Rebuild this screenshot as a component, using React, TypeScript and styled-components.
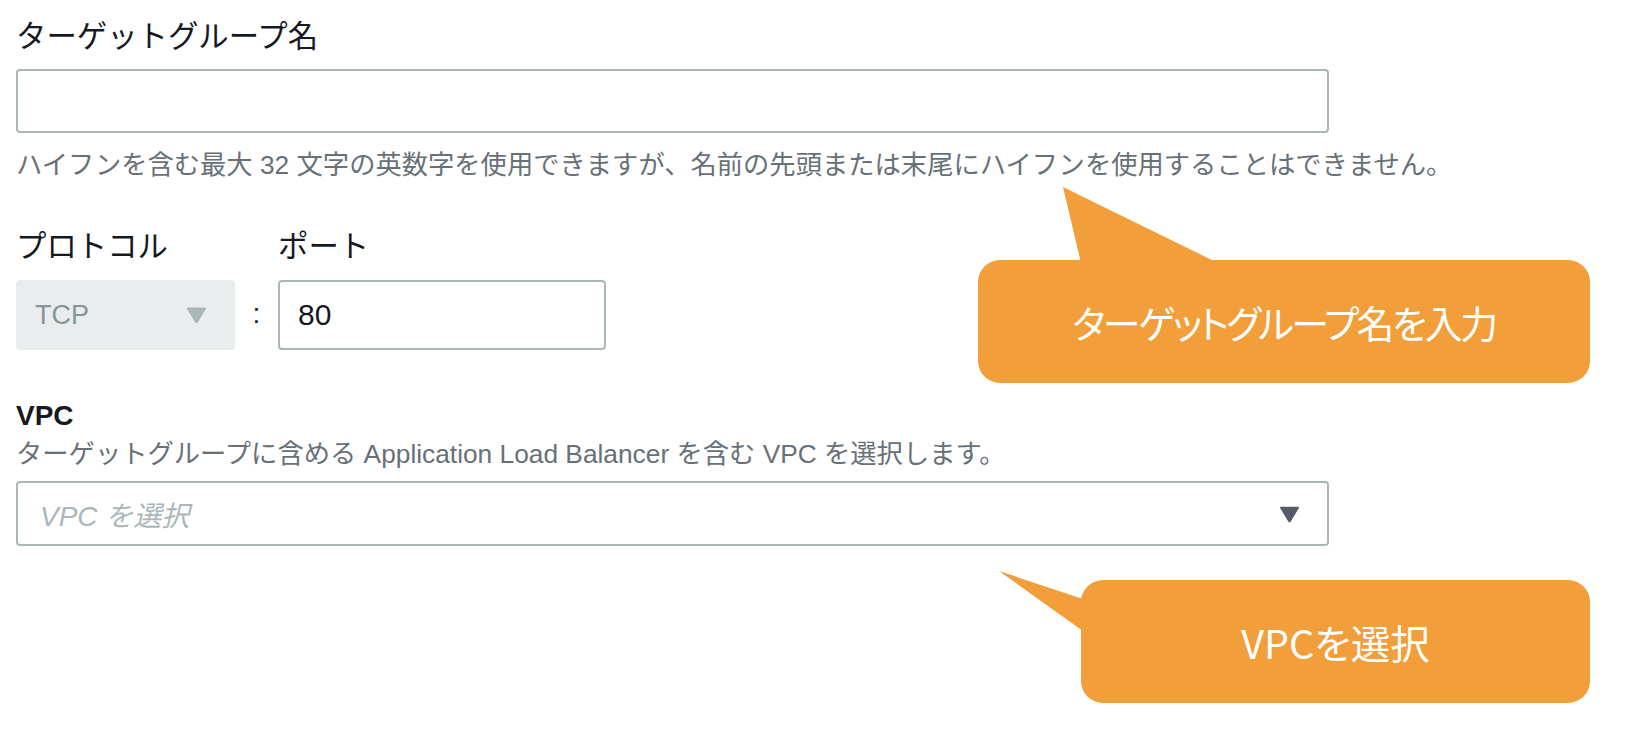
import React from 'react'
import styled, { createGlobalStyle } from 'styled-components'

const GlobalStyle = createGlobalStyle`
  html, body {
    margin: 0;
    padding: 0;
    background: #ffffff;
  }
  body {
    font-family: 'Liberation Sans', 'Noto Sans CJK JP', sans-serif;
    color: #16191f;
  }
`

const Caret = ({ color, width, height }: { color: string; width: number; height: number }) => (
  <svg width={width} height={height} viewBox='0 0 20 17'>
    <path
      d='M2 1.5 H18 Q19.6 1.5 18.8 3 L11.2 15.6 Q10 17.2 8.8 15.6 L1.2 3 Q0.4 1.5 2 1.5 Z'
      fill={color}
    />
  </svg>
)

const App = () => {
  return (
    <Page>
      <GlobalStyle />
      <Form>
        <Field>
          <Label>ターゲットグループ名</Label>
          <TextBox />
          <Help>
            ハイフンを含む最大 32 文字の英数字を使用できますが、名前の先頭または末尾にハイフンを使用することはできません。
          </Help>
        </Field>

        <ProtocolGrid>
          <Label>プロトコル</Label>
          <span />
          <Label>ポート</Label>
          <DisabledSelect>
            <span>TCP</span>
            <Caret color='#aab7b8' width={23} height={18} />
          </DisabledSelect>
          <Colon>:</Colon>
          <PortBox>80</PortBox>
        </ProtocolGrid>

        <VpcField>
          <SectionLabel>VPC</SectionLabel>
          <Description>
            ターゲットグループに含める Application Load Balancer を含む VPC を選択します。
          </Description>
          <SelectBox>
            <Placeholder>VPC を選択</Placeholder>
            <Caret color='#545b64' width={21} height={18} />
          </SelectBox>
        </VpcField>
      </Form>

      <Callout $left={978} $top={260} $width={612} $size={38} $spacing={-2.5}>
        <Tail width={160} height={76} viewBox='0 0 160 76' $left={83} $top={-73}>
          <polygon points='2,0 20,76 157,76' fill='#f29e3a' />
        </Tail>
        ターゲットグループ名を入力
      </Callout>

      <Callout $left={1081} $top={580} $width={509} $size={39.5} $spacing={0}>
        <Tail width={84} height={62} viewBox='0 0 84 62' $left={-82} $top={-9}>
          <polygon points='0,0 84,28 84,60' fill='#f29e3a' />
        </Tail>
        VPCを選択
      </Callout>
    </Page>
  )
}

const Page = styled.div`
  position: relative;
  width: 1634px;
  height: 736px;
  overflow: hidden;
`

const Form = styled.div`
  display: flex;
  flex-direction: column;
  padding: 18px 0 0 16px;
  width: 1313px;
`

const Field = styled.div`
  display: flex;
  flex-direction: column;
`

const Label = styled.div`
  font-size: 30.4px;
  line-height: 36px;
  color: #16191f;
`

const TextBox = styled.div`
  box-sizing: border-box;
  margin-top: 15px;
  height: 64px;
  width: 100%;
  border: 2px solid #aab7b8;
  border-radius: 4px;
  background: #fff;
`

const Help = styled.div`
  margin-top: 14px;
  font-size: 26.3px;
  line-height: 36px;
  color: #687078;
  white-space: nowrap;
`

const ProtocolGrid = styled.div`
  display: grid;
  grid-template-columns: 219px 43px 328px;
  grid-template-rows: 36px 70px;
  row-gap: 16px;
  align-items: center;
  margin-top: 45px;
`

const DisabledSelect = styled.div`
  box-sizing: border-box;
  height: 70px;
  display: flex;
  align-items: center;
  justify-content: space-between;
  padding: 0 27px 0 19px;
  background: #eaeded;
  border-radius: 4px;
  font-size: 27px;
  color: #879596;
`

const Colon = styled.div`
  text-align: center;
  font-size: 28px;
  color: #16191f;
  padding-bottom: 2px;
`

const PortBox = styled.div`
  box-sizing: border-box;
  height: 70px;
  display: flex;
  align-items: center;
  padding-left: 18px;
  border: 2px solid #aab7b8;
  border-radius: 4px;
  font-size: 30px;
  color: #16191f;
`

const VpcField = styled.div`
  display: flex;
  flex-direction: column;
  margin-top: 48px;
`

const SectionLabel = styled.div`
  font-size: 28px;
  line-height: 36px;
  font-weight: 700;
  color: #16191f;
`

const Description = styled.div`
  margin-top: 2px;
  font-size: 26.3px;
  line-height: 36px;
  color: #687078;
  white-space: nowrap;
`

const SelectBox = styled.div`
  box-sizing: border-box;
  margin-top: 9px;
  height: 65px;
  display: flex;
  align-items: center;
  justify-content: space-between;
  padding: 0 27px 0 22px;
  border: 2px solid #aab7b8;
  border-radius: 4px;
`

const Placeholder = styled.span`
  font-size: 28px;
  font-style: italic;
  color: #aab7b8;
`

const Callout = styled.div<{
  $left: number
  $top: number
  $width: number
  $size: number
  $spacing: number
}>`
  position: absolute;
  left: ${p => p.$left}px;
  top: ${p => p.$top}px;
  width: ${p => p.$width}px;
  height: 123px;
  box-sizing: border-box;
  display: flex;
  align-items: center;
  justify-content: center;
  background: #f29e3a;
  border-radius: 22px;
  color: #ffffff;
  font-family: 'Noto Sans CJK JP', sans-serif;
  font-size: ${p => p.$size}px;
  letter-spacing: ${p => p.$spacing}px;
  font-feature-settings: 'palt';
`

const Tail = styled.svg<{ $left: number; $top: number }>`
  position: absolute;
  left: ${p => p.$left}px;
  top: ${p => p.$top}px;
  display: block;
`

export default App
